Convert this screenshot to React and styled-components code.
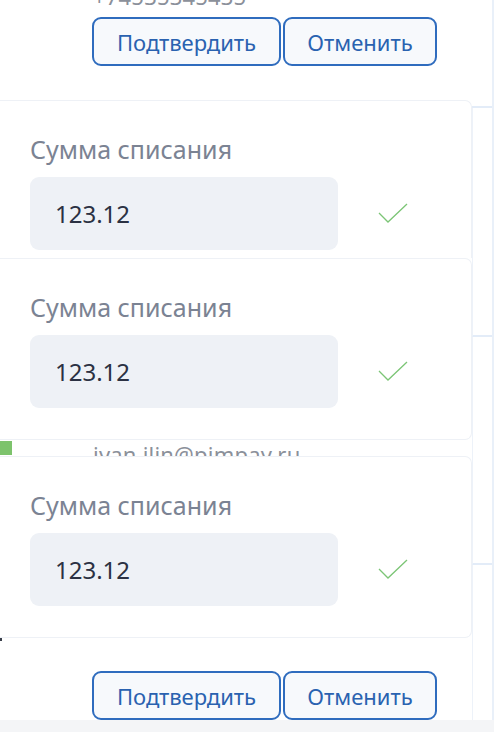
import React from "react";
import styled, { createGlobalStyle } from "styled-components";

const GlobalStyle = createGlobalStyle`
  html, body {
    margin: 0;
    padding: 0;
    background: #ffffff;
  }
  body {
    font-family: "Noto Sans", "Open Sans", sans-serif;
    -webkit-font-smoothing: antialiased;
  }
  * {
    box-sizing: border-box;
  }
`;

const Page = styled.div`
  width: 494px;
  height: 732px;
  overflow: hidden;
  display: flex;
  flex-direction: column;
`;

const Body = styled.div`
  flex: 1;
  display: grid;
  grid-template-columns: 472px 22px;
  min-height: 0;
`;

const Main = styled.div`
  display: flex;
  flex-direction: column;
  min-width: 0;
`;

const Side = styled.div`
  display: flex;
  flex-direction: column;
  border-right: 2px solid #e9f0f9;
`;

const SideRow = styled.div`
  height: ${p => p.h}px;
  flex-shrink: 0;
  border-bottom: 2px solid #e3ecf8;
  border-left: ${p => (p.first ? "none" : "1px solid #edf2f9")};
`;

const Footer = styled.div`
  height: 12px;
  background: #f4f5f7;
`;

const Clip = styled.div`
  height: ${p => p.h}px;
  overflow: hidden;
  display: flex;
  align-items: flex-end;
  flex-shrink: 0;
`;

const MutedText = styled.div`
  font-size: 22px;
  line-height: 26px;
  color: #8b909a;
  padding-left: 93px;
  letter-spacing: 0.2px;
`;

const ButtonRow = styled.div`
  display: flex;
  gap: 2px;
  padding-left: 92px;
  margin-top: ${p => p.top}px;
  flex-shrink: 0;
`;

const Button = styled.button`
  width: ${p => p.w}px;
  height: 49px;
  border: 2px solid #2f6cbe;
  border-radius: 9px;
  background: #f7f9fc;
  color: #2a62b0;
  font-family: "Noto Sans", "Open Sans", sans-serif;
  font-size: 22px;
  padding: 0;
  cursor: pointer;
`;

const Card = styled.div`
  height: ${p => p.h}px;
  flex-shrink: 0;
  background: #ffffff;
  border: 1px solid #eef1f6;
  border-left: none;
  border-bottom: ${p => (p.cut ? "none" : "1px solid #eef1f6")};
  border-radius: ${p => (p.cut ? "0 7px 0 0" : "0 7px 7px 0")};
  margin-top: ${p => p.top || 0}px;
  padding: 33px 0 0 30px;
  overflow: hidden;
`;

const Label = styled.div`
  font-size: 25px;
  line-height: 30px;
  color: #7b8393;
`;

const FieldRow = styled.div`
  display: flex;
  align-items: center;
  margin-top: 13px;
`;

const Field = styled.div`
  width: 308px;
  height: 73px;
  border-radius: 9px;
  background: #eef1f6;
  display: flex;
  align-items: center;
  padding-left: 25px;
  font-size: 24px;
  color: #2b3143;
`;

const Check = styled.svg`
  margin-left: 40px;
  width: 30px;
  height: 22px;
`;

const Strip = styled.div`
  height: 16px;
  flex-shrink: 0;
  display: flex;
  align-items: flex-start;
  overflow: hidden;
`;

const GreenMark = styled.div`
  width: 12px;
  height: 14px;
  margin-top: 1px;
  background: #7dc36c;
  flex-shrink: 0;
`;

const Email = styled.div`
  font-size: 22px;
  line-height: 26px;
  color: #8b909a;
  margin-left: 81px;
  margin-top: 1px;
  letter-spacing: 0.2px;
`;

const Tick = styled.div`
  width: 2px;
  height: 3px;
  background: #3a3f4a;
  flex-shrink: 0;
`;

const amounts = [
  { h: 158, cut: true, top: 34 },
  { h: 182 },
];

function AmountCard({ h, cut, top }) {
  return (
    <Card h={h} cut={cut} top={top}>
      <Label>Сумма списания</Label>
      <FieldRow>
        <Field>123.12</Field>
        <Check viewBox="0 0 30 22">
          <path d="M1 10 L10 19 L29 1" fill="none" stroke="#7cc576" strokeWidth="1.3" />
        </Check>
      </FieldRow>
    </Card>
  );
}

function Actions({ top }) {
  return (
    <ButtonRow top={top}>
      <Button w={189}>Подтвердить</Button>
      <Button w={154}>Отменить</Button>
    </ButtonRow>
  );
}

export default function App() {
  return (
    <Page>
      <GlobalStyle />
      <Body>
        <Main>
          <Clip h={9}>
            <MutedText>+74535345435</MutedText>
          </Clip>
          <Actions top={8} />
          {amounts.map((a, i) => (
            <AmountCard key={i} {...a} />
          ))}
          <Strip>
            <GreenMark />
            <Email>ivan.ilin@pimpay.ru</Email>
          </Strip>
          <AmountCard h={182} />
          <Tick />
          <Actions top={30} />
        </Main>
        <Side>
          <SideRow h={108} first />
          <SideRow h={229} />
          <SideRow h={228} />
          <SideRow h={200} />
        </Side>
      </Body>
      <Footer />
    </Page>
  );
}
